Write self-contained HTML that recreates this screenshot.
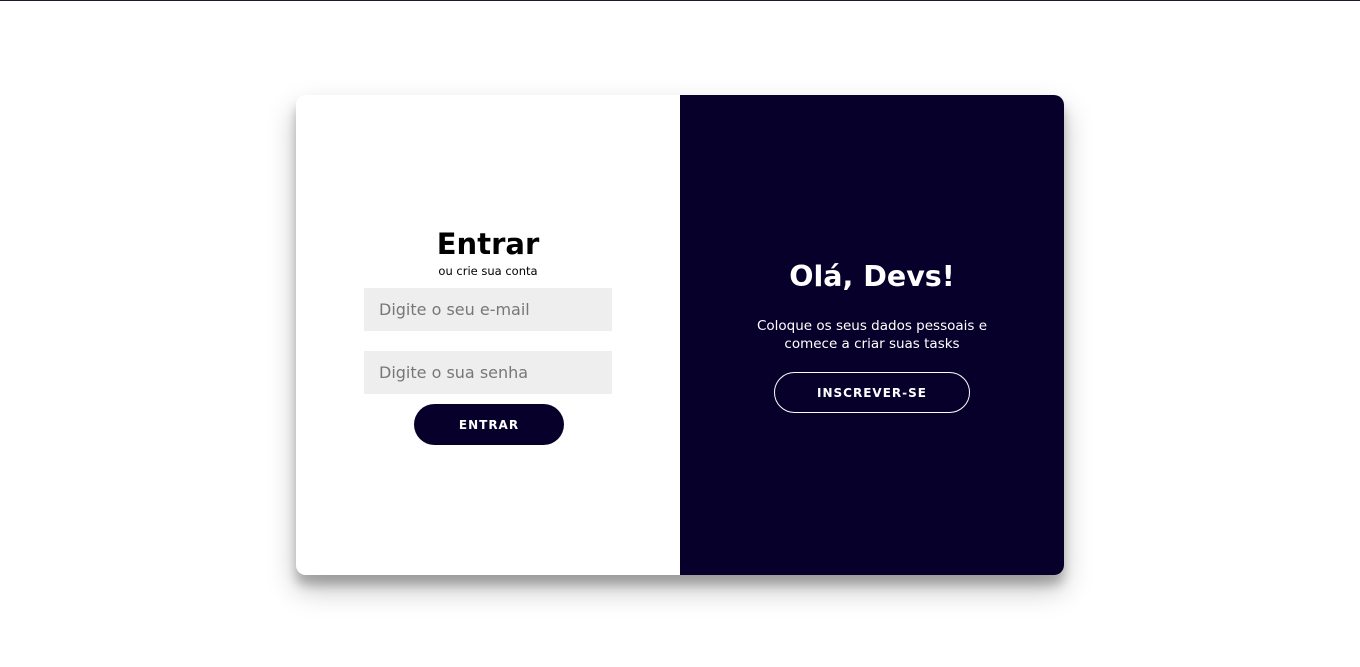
<!DOCTYPE html>
<html><head><meta charset="utf-8"><style>
*{margin:0;padding:0;box-sizing:border-box}
body{width:1360px;height:667px;background:#fff;font-family:"DejaVu Sans","Liberation Sans",sans-serif;position:relative;overflow:hidden}
.line{position:absolute;left:0;top:0;width:1360px;height:1px;background:#1a1a2e}
.card{position:absolute;left:296px;top:95px;width:768px;height:480px;border-radius:10px;overflow:hidden;box-shadow:0 14px 28px rgba(0,0,0,.25),0 10px 10px rgba(0,0,0,.22);display:flex}
.l{width:384px;height:100%;background:#fff;position:relative}
.r{width:384px;height:100%;background:#07002b;position:relative;color:#fff;text-align:center}
h1{position:absolute;left:0;width:100%;text-align:center;font-weight:bold}
.in{position:absolute;left:68px;width:248px;height:43px;background:#eee;color:#777;font-size:16px;padding-left:15px;line-height:43px}
.btn{position:absolute;border-radius:22px;font-size:12px;font-weight:bold;letter-spacing:1px;text-align:center;color:#fff}
</style></head><body>
<div class="line"></div>
<div class="card">
<div class="l">
<h1 style="top:132px;font-size:29px;color:#000">Entrar</h1>
<div style="position:absolute;top:169px;width:100%;text-align:center;font-size:11.5px;color:#000">ou crie sua conta</div>
<div class="in" style="top:193px">Digite o seu e-mail</div>
<div class="in" style="top:256px">Digite o sua senha</div>
<div class="btn" style="left:118px;top:309px;width:150px;height:41px;line-height:42px;background:#07002b">ENTRAR</div>
</div>
<div class="r">
<h1 style="top:165px;font-size:28.5px">Olá, Devs!</h1>
<div style="position:absolute;top:222px;width:100%;font-size:13.5px;line-height:18px">Coloque os seus dados pessoais e<br>comece a criar suas tasks</div>
<div class="btn" style="left:94px;top:277px;width:196px;height:41px;line-height:40px;border:1px solid #fff">INSCREVER-SE</div>
</div>
</div>
</body></html>
